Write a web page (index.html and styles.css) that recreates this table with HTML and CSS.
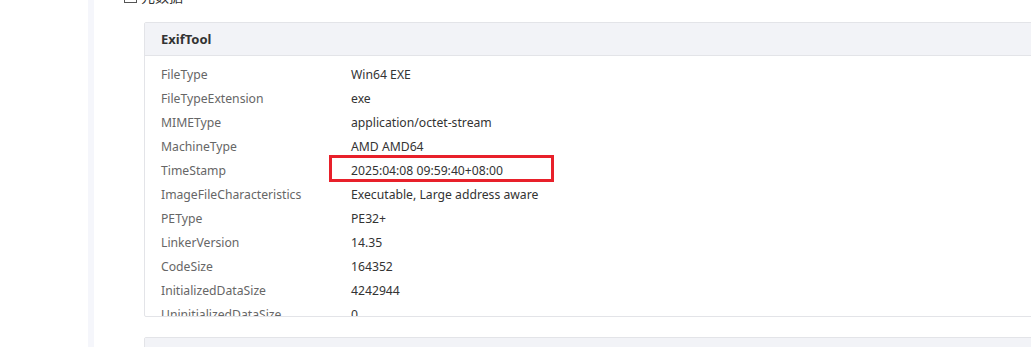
FILE: index.html
```html
<!DOCTYPE html>
<html lang="zh">
<head>
<meta charset="utf-8">
<link rel="stylesheet" href="styles.css">
</head>
<body>
<div class="page">
  <aside class="sidebar"></aside>
  <div class="divider"></div>
  <main class="main">
    <div class="section-title">
      <svg class="section-icon" width="13" height="13" viewBox="0 0 13 13"><rect x="0.5" y="0.5" width="12" height="12" fill="none" stroke="#555" stroke-width="1"/><line x1="3" y1="9.5" x2="10" y2="9.5" stroke="#555"/></svg>
      <span>元数据</span>
    </div>
    <section class="card">
      <div class="card-header">ExifTool</div>
      <div class="card-body">
        <div class="row"><span class="key">FileType</span><span class="val">Win64 EXE</span></div>
        <div class="row"><span class="key">FileTypeExtension</span><span class="val">exe</span></div>
        <div class="row"><span class="key">MIMEType</span><span class="val">application/octet-stream</span></div>
        <div class="row"><span class="key">MachineType</span><span class="val">AMD AMD64</span></div>
        <div class="row highlight"><span class="key">TimeStamp</span><span class="val">2025:04:08 09:59:40+08:00</span><span class="mark"></span></div>
        <div class="row"><span class="key">ImageFileCharacteristics</span><span class="val">Executable, Large address aware</span></div>
        <div class="row"><span class="key">PEType</span><span class="val">PE32+</span></div>
        <div class="row"><span class="key">LinkerVersion</span><span class="val">14.35</span></div>
        <div class="row"><span class="key">CodeSize</span><span class="val">164352</span></div>
        <div class="row"><span class="key">InitializedDataSize</span><span class="val">4242944</span></div>
        <div class="row"><span class="key">UninitializedDataSize</span><span class="val">0</span></div>
        <div class="row"><span class="key">EntryPoint</span><span class="val">0x1c0e4</span></div>
      </div>
    </section>
    <section class="card">
      <div class="card-header">&nbsp;</div>
    </section>
  </main>
</div>
</body>
</html>
```
FILE: styles.css
```css
html, body {
  margin: 0;
  padding: 0;
  background: #ffffff;
  overflow: hidden;
  height: 347px;
}
.page {
  display: flex;
  width: 1031px;
  height: 347px;
  overflow: hidden;
  font-family: "Noto Sans", "Noto Sans CJK SC", sans-serif;
  font-size: 12.2px;
  color: #333;
}
.sidebar {
  width: 88px;
  flex: none;
  background: #fff;
}
.divider {
  width: 6px;
  flex: none;
  background: #f5f6fb;
}
.main {
  flex: 1;
  min-width: 0;
  padding-left: 50px;
}
.section-title {
  display: flex;
  align-items: center;
  gap: 4px;
  height: 20px;
  margin-top: -14px;
  margin-left: -20px;
  font-size: 14px;
  color: #333;
}
.section-icon {
  display: block;
}
.card {
  margin-top: 16px;
  width: 1000px;
  border: 1px solid #e3e4e8;
  border-radius: 2px;
  background: #fff;
}
.card + .card {
  margin-top: 20px;
}
.card-header {
  height: 32px;
  line-height: 32px;
  padding-left: 16px;
  background: #f2f3f7;
  border-bottom: 1px solid #e3e4e8;
  font-weight: bold;
  font-size: 13px;
  color: #333;
}
.card-body {
  height: 260px;
  overflow: hidden;
  padding-top: 7px;
  box-sizing: border-box;
}
.row {
  position: relative;
  display: flex;
  height: 24px;
  line-height: 24px;
  padding-left: 16px;
}
.key {
  width: 190px;
  flex: none;
  color: #666;
}
.val {
  color: #333;
}
.mark {
  position: absolute;
  left: 184px;
  top: -4px;
  width: 219px;
  height: 21px;
  border: 3px solid #e8202a;
}
```
